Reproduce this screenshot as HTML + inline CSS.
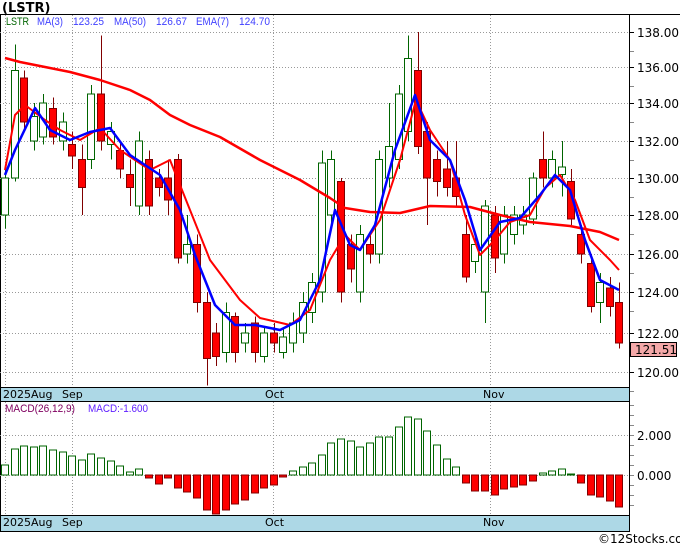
<!DOCTYPE html>
<html><head><meta charset="utf-8"><style>
body{margin:0;background:#fff;width:680px;height:546px;overflow:hidden;font-family:"Liberation Sans",sans-serif}
svg text{font-family:"DejaVu Sans","Liberation Sans",sans-serif}
svg text.l{font-family:"Liberation Sans",sans-serif}
</style></head><body>
<svg id="s" width="680" height="546" xmlns="http://www.w3.org/2000/svg" shape-rendering="crispEdges">
<text x="2" y="12" font-size="13" font-weight="bold" fill="#000">(LSTR)</text>
<rect x="0.5" y="14.5" width="629" height="517" fill="none" stroke="#000"/>
<line x1="0" y1="14.5" x2="680" y2="14.5" stroke="#000"/>
<rect x="0.5" y="387.5" width="629" height="14" fill="#add8e6" stroke="#000"/>
<rect x="0.5" y="515.5" width="629" height="16" fill="#add8e6" stroke="#000"/>
<g font-size="11" fill="#000">
<text x="3" y="398">2025Aug</text><text x="62" y="398">Sep</text><text x="265" y="398">Oct</text><text x="483" y="398">Nov</text>
<text x="3" y="526">2025Aug</text><text x="62" y="526">Sep</text><text x="265" y="526">Oct</text><text x="483" y="526">Nov</text>
</g>
<g id="grid" stroke="#999" stroke-dasharray="1,2"></g>
<g id="c"></g>
<g id="m"></g>
<g font-size="11">
<text class="l" x="6" y="25" fill="#006400" textLength="23" lengthAdjust="spacingAndGlyphs">LSTR</text>
<text class="l" x="37" y="25" fill="#4040ff" textLength="26" lengthAdjust="spacingAndGlyphs">MA(3)</text>
<text class="l" x="73" y="25" fill="#4040ff" textLength="31" lengthAdjust="spacingAndGlyphs">123.25</text>
<text class="l" x="114" y="25" fill="#4040ff" textLength="32" lengthAdjust="spacingAndGlyphs">MA(50)</text>
<text class="l" x="156" y="25" fill="#4040ff" textLength="31" lengthAdjust="spacingAndGlyphs">126.67</text>
<text class="l" x="196" y="25" fill="#4040ff" textLength="33" lengthAdjust="spacingAndGlyphs">EMA(7)</text>
<text class="l" x="239" y="25" fill="#4040ff" textLength="31" lengthAdjust="spacingAndGlyphs">124.70</text>
<text class="l" x="5" y="412" fill="#800060" textLength="70" lengthAdjust="spacingAndGlyphs">MACD(26,12,9)</text>
<text class="l" x="88" y="412" fill="#6020ff" textLength="60" lengthAdjust="spacingAndGlyphs">MACD:-1.600</text>
</g>
<g font-size="12" fill="#000" id="ax"></g>
<rect x="630.5" y="342.5" width="46" height="14" fill="#f4a8a8" stroke="#000"/>
<text x="635" y="354" font-size="12" fill="#000">121.51</text>
<text x="598" y="543" font-size="12" fill="#000">©12Stocks.com</text>
</svg>
<script>
var NS="http://www.w3.org/2000/svg";
function el(p,t,a){var e=document.createElementNS(NS,t);for(var k in a)e.setAttribute(k,a[k]);p.appendChild(e);return e;}
var L=[[138,32],[136,67],[134,103],[132,141],[130,178],[128,215],[126,254],[124,292],[122,333],[120,372],[118,411]];
function Y(p){for(var i=0;i<L.length-1;i++){if(p<=L[i][0]&&p>=L[i+1][0]){var a=L[i],b=L[i+1];return a[1]+(a[0]-p)/(a[0]-b[0])*(b[1]-a[1]);}}return p>138?32-(p-138)*17.5:411;}
var g=document.getElementById('grid'),ax=document.getElementById('ax');
L.slice(0,10).forEach(function(l){el(g,'line',{x1:0,y1:l[1]+.5,x2:629,y2:l[1]+.5});el(ax,'line',{x1:629,y1:l[1]+.5,x2:634,y2:l[1]+.5,stroke:'#000'});var t=el(ax,'text',{x:637,y:l[1]+5});t.textContent=l[0].toFixed(2);
 el(ax,'line',{x1:629,y1:l[1]+19.5,x2:634,y2:l[1]+19.5,stroke:'#888'});});
[[435,"2.000"],[475,"0.000"]].forEach(function(m){el(g,'line',{x1:0,y1:m[0]+.5,x2:629,y2:m[0]+.5});el(ax,'line',{x1:629,y1:m[0]+.5,x2:634,y2:m[0]+.5,stroke:'#000'});var t=el(ax,'text',{x:637,y:m[0]+5});t.textContent=m[1];});
for(var yy=405;yy<515;yy+=10)el(ax,'line',{x1:629,y1:yy+.5,x2:634,y2:yy+.5,stroke:'#888'});
[5,72,273,490].forEach(function(x){el(g,'line',{x1:x+.5,y1:15,x2:x+.5,y2:387});el(g,'line',{x1:x+.5,y1:402,x2:x+.5,y2:515});});
el(ax,'line',{x1:629.5,y1:14,x2:629.5,y2:532,stroke:'#000'});
var C=[[128,130,130.5,127.3],[130,135.8,137.3,129.8],[135.4,133,135.8,132.5],[132,133.3,134,131.5],[132.2,134,134.5,131.8],[133.7,132.2,134.3,131.8],[132,133,133.5,131.5],[131.8,131.2,132.5,130.5],[131,129.5,131.8,128],[131,134.5,135,130.5],[134.5,132,137.8,131.5],[131.8,132.5,133,131],[131.5,130.5,132,130],[130.2,129.5,131,128.5],[128.5,132,132.5,128],[131,128.5,131.5,128],[130,129.5,130.5,129],[130,128.8,131,128],[131,125.8,131.3,125.5],[126,126.5,128,125.5],[126.5,123.5,127,123],[123.5,120.7,124,119.3],[122,120.8,122.5,120.3],[121,123,123.5,120.5],[122.8,121,123,120.5],[121.5,122,122.5,121],[122.5,121,122.8,120.5],[120.8,122,122.3,120.5],[122,121.5,122.5,121],[121,121.8,122.3,120.7],[121.5,122.5,123,121],[122,123.5,124,121.5],[123,124.5,125,122.5],[124,130.8,131.5,123.5],[128,131,131.5,127.5],[129.8,124,130,123.5],[126.5,125.2,127,124.5],[124,127,127.5,123.5],[126.5,126,127,125.5],[126,131,131.5,125.5],[130,131.7,134,129.5],[131,134.5,135,130.5],[132.5,136.5,137.8,132],[135.8,131.7,138,131.3],[132.5,130,133,127.5],[131,129.8,131.5,129],[130.5,129.5,132,129],[130,129,132,128.5],[127,124.8,128,124.5],[125.6,126.5,127,125],[124,128.5,128.8,122.5],[128,125.8,128.5,125],[126,128,128.5,125.5],[127,128,128.5,126.5],[127.5,128,128.5,127],[127.8,130,130.3,127.5],[131,130,132.5,129.5],[130,131,131.5,129.5],[130.2,130.6,132,129],[129.8,127.8,130.5,127.5],[127,126,127.5,125.5],[125.5,123.3,126,123],[123.5,124.5,125,122.5],[124.2,123.3,124.8,122.8],[123.5,121.5,124.5,121.2]];
var cg=document.getElementById('c');
function X(i){return 5+i*9.6;}
C.forEach(function(c,i){var x=Math.round(X(i)),up=c[1]>=c[0],col=up?'#006400':'#800000';
 el(cg,'line',{x1:x+.5,y1:Y(c[2]),x2:x+.5,y2:Y(c[3]),stroke:col});
 var t=Y(Math.max(c[0],c[1])),b=Y(Math.min(c[0],c[1]));
 el(cg,'rect',{x:x-3.5,y:t,width:7,height:Math.max(1,b-t),fill:up?'#fff':'#f00',stroke:up?'#006400':'#800000'});});
var mg=document.getElementById('m');
function pl(pts,col,w){el(mg,'polyline',{points:pts,fill:'none',stroke:col,'stroke-width':w,'shape-rendering':'auto','stroke-linejoin':'round'});}
pl("5,58 20,62 70,72 100,80 130,90 150,100 170,115 190,125 220,137 260,160 300,180 330,198 345,208 370,212 400,213 430,206 470,207 500,215 530,222 570,226 600,232 619,240","#f00",2.5);
pl("5,170 15,115 25,105 45,120 60,130 80,140 100,128 120,150 150,170 170,160 190,210 210,260 240,300 260,318 290,325 310,310 330,260 345,235 360,250 380,220 400,160 416,100 430,130 450,160 465,215 480,255 495,240 510,222 530,215 545,188 560,175 575,200 590,240 610,260 619,270","#f00",2);
pl("5,175 15,150 35,108 50,130 70,140 90,132 110,128 130,155 160,175 180,210 195,255 215,305 235,325 255,325 280,330 300,320 320,280 335,210 350,245 360,250 375,225 395,150 415,95 430,140 450,160 465,200 480,250 500,222 520,218 540,195 555,175 570,190 585,240 600,280 619,290","#0000ff",2.5);
var M=[0.5,1.3,1.45,1.4,1.45,1.25,1.15,0.95,0.75,1.05,0.85,0.7,0.45,0.15,0.3,-0.15,-0.45,-0.15,-0.65,-0.85,-1.15,-1.75,-1.95,-1.75,-1.45,-1.25,-0.9,-0.65,-0.5,-0.1,0.2,0.4,0.6,1.0,1.6,1.8,1.7,1.4,1.6,1.9,1.9,2.4,2.9,2.8,2.2,1.5,0.8,0.4,-0.4,-0.8,-0.8,-1.0,-0.7,-0.6,-0.5,-0.3,0.1,0.2,0.3,0.05,-0.4,-1.0,-1.1,-1.3,-1.6];
M.forEach(function(v,i){var x=Math.round(X(i)),h=Math.abs(v)*20,up=v>=0;
 el(cg,'rect',{x:x-3.5,y:up?475-h:475,width:7,height:Math.max(1,h),fill:up?'#fff':'#f00',stroke:up?'#006400':'#800000'});});
</script>
</body></html>
